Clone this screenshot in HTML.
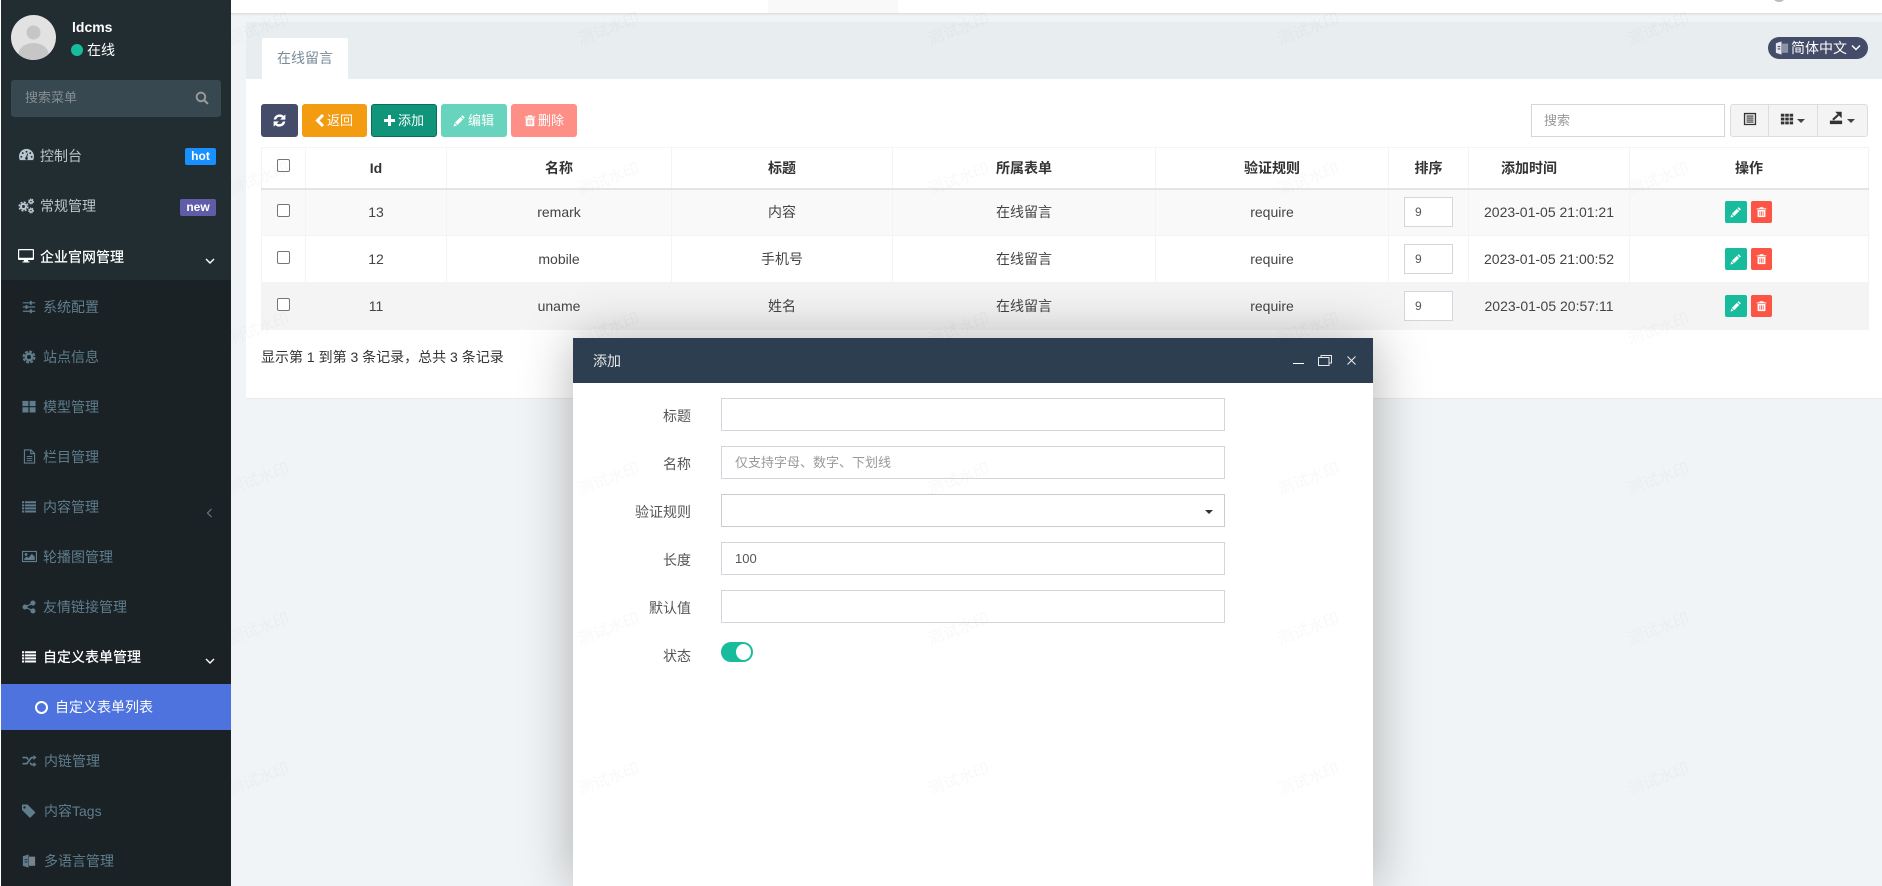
<!DOCTYPE html>
<html lang="zh"><head><meta charset="utf-8"><title>在线留言</title>
<style>
*{box-sizing:border-box}
html,body{margin:0;padding:0;width:1882px;height:886px;overflow:hidden;background:#f1f4f6;font-family:"Liberation Sans","Noto Sans CJK SC",sans-serif;font-size:14px;color:#333}
.a{position:absolute}
.t{position:absolute;height:20px;line-height:20px;white-space:nowrap}
svg.i{position:absolute;fill:currentColor;display:block}
#side{position:absolute;left:0;top:0;width:231px;height:886px;background:#1a2226;border-left:1px solid #fff;z-index:5;overflow:hidden}
#side .top{position:absolute;left:0;top:0;width:230px;height:280px;background:#222d32}
#side .s{color:#b8c7ce}
#side .m{color:#5f7d8c}
#side .w{color:#fff}
.btn{position:absolute;top:104px;height:33px;border-radius:3px;color:#fff;font-size:13px;line-height:31px;border:1px solid transparent}
.btn span{position:absolute;top:0;white-space:nowrap}
#tbl{position:absolute;left:261px;top:147px;width:1607px;border-collapse:collapse;table-layout:fixed;font-size:14px}
#tbl th,#tbl td{border:1px solid #f4f4f4;padding:0;text-align:center;vertical-align:middle;position:relative}
#tbl th{height:41px;border-bottom:2px solid #e4e4e4;font-weight:700;color:#333;line-height:20px;padding-bottom:0}
#tbl td{height:47px;color:#444}
#tbl tr.r1 td{background:#f9f9f9}
#tbl tr.r3 td{background:#f4f4f4;border-color:#f4f4f4}
.cb{display:inline-block;width:13px;height:13px;border:1px solid #767676;border-radius:2px;background:#fff;position:absolute;left:15px;top:50%;margin-top:-9px}
#tbl td .cb{margin-top:-8px}
.ord{position:absolute;left:15px;top:8px;width:49px;height:30px;border:1px solid #d2d6de;background:#fff;font-size:12px;color:#555;line-height:28px;text-align:left;padding-left:10px}
.r1 .ord{top:7px}
.ed,.de{position:absolute;top:12px;height:22px;border-radius:2px;color:#fff}
.r1 .ed,.r1 .de{top:11px}
.ed{left:95px;width:22px;background:#18bc9c}.de{left:121px;width:21px;background:#fc5445}
#wm{position:absolute;left:0;top:0;width:1882px;height:886px;z-index:4;pointer-events:none;overflow:hidden}
#wm span{position:absolute;width:80px;height:20px;line-height:20px;text-align:center;font-size:16px;color:rgba(0,0,0,.028);transform:rotate(-20deg);white-space:nowrap}
#dlg{position:absolute;left:573px;top:338px;width:800px;height:548px;background:#fff;box-shadow:1px 1px 50px rgba(0,0,0,.3);z-index:3}
#dlg .hd{position:absolute;left:0;top:0;width:800px;height:45px;background:#2c3e50}
.inp{position:absolute;left:148px;width:504px;height:33px;border:1px solid #d2d6de;background:#fff;font-size:13px;line-height:31px;padding-left:13px;color:#555}
.lb{position:absolute;left:0;width:118px;text-align:right;height:20px;line-height:20px;color:#555;font-size:14px}
</style></head><body>
<svg width="0" height="0" style="position:absolute"><defs>
<symbol id="dash" viewBox="0 0 16 16"><path fill-rule="evenodd" d="M8 2C3.6 2 0 5.6 0 10c0 1.4.4 2.8 1 4h14c.6-1.2 1-2.6 1-4 0-4.400-3.600-8-8-8zM8 4a1 1 0 1 1 0 2 1 1 0 0 1 0-2zM4 5.500a1 1 0 1 1 0 2 1 1 0 0 1 0-2zM12 5.500a1 1 0 1 1 0 2 1 1 0 0 1 0-2zM2.500 9.500a1 1 0 1 1 0 2 1 1 0 0 1 0-2zM13.500 9.500a1 1 0 1 1 0 2 1 1 0 0 1 0-2zM8.700 7l1-.3-.9 4.200a1.500 1.500 0 1 1-1.400-.1z"/></symbol>
<symbol id="gears" viewBox="0 0 16 16"><g fill="none" stroke="currentColor"><circle cx="5.500" cy="8.500" r="2.500" stroke-width="2"/><circle cx="5.500" cy="8.500" r="4.300" stroke-width="1.600" stroke-dasharray="2 1.400"/><circle cx="13" cy="3.500" r="1.500" stroke-width="1.400"/><circle cx="13" cy="3.500" r="2.500" stroke-width="1" stroke-dasharray="1.200 .9"/><circle cx="13" cy="12.500" r="1.500" stroke-width="1.400"/><circle cx="13" cy="12.500" r="2.500" stroke-width="1" stroke-dasharray="1.200 .9"/></g></symbol>
<symbol id="desk" viewBox="0 0 16 16"><path fill-rule="evenodd" d="M1 1h14a1 1 0 0 1 1 1v9a1 1 0 0 1-1 1H10l.3 1.500h1.200v1h-7v-1h1.200L6 12H1a1 1 0 0 1-1-1V2a1 1 0 0 1 1-1zM1.200 2.200V9.800h13.600V2.200z"/></symbol>
<symbol id="slid" viewBox="0 0 16 16"><path d="M1 2.500h14v1.400H1zM1 7.300h14v1.400H1zM1 12.100h14v1.400H1z"/><path d="M9 1h2.200v4.400H9zM4 5.800h2.200v4.400H4zM9 10.600h2.200V15H9z"/></symbol>
<symbol id="cog" viewBox="0 0 16 16"><circle cx="8" cy="8" r="3.700" fill="none" stroke="currentColor" stroke-width="2.800"/><circle cx="8" cy="8" r="6.300" fill="none" stroke="currentColor" stroke-width="2.200" stroke-dasharray="3.300 1.650"/></symbol>
<symbol id="th" viewBox="0 0 16 16"><path d="M.5 1.500h6.800v6H.5zM8.700 1.500h6.800v6H8.700zM.5 8.900h6.800v6H.5zM8.700 8.900h6.800v6H8.700z"/></symbol>
<symbol id="file" viewBox="0 0 16 16"><path fill="none" stroke="currentColor" stroke-width="1.200" d="M2.600 1h7l3.800 3.800V15H2.600zM9.300 1v4h4.100"/><path d="M5 7.500h6v1H5zM5 9.700h6v1H5zM5 11.900h6v1H5z"/></symbol>
<symbol id="list" viewBox="0 0 16 16"><path d="M0 2h2.500v2.300H0zM3.500 2H16v2.300H3.500zM0 5.500h2.500v2.300H0zM3.500 5.500H16v2.300H3.500zM0 9h2.500v2.300H0zM3.500 9H16v2.300H3.500zM0 12.500h2.500v2.300H0zM3.500 12.500H16v2.300H3.500z"/></symbol>
<symbol id="pic" viewBox="0 0 16 16"><path fill-rule="evenodd" d="M0 2h16v12H0zM1.200 3.200v9.600h13.600V3.200z"/><circle cx="4.300" cy="5.800" r="1.500"/><path d="M2.500 11.800V10l2.500-2 1.800 1.400L10.500 5l3.100 3.300v3.500z"/></symbol>
<symbol id="share" viewBox="0 0 16 16"><circle cx="3.500" cy="8" r="2.900"/><circle cx="12.500" cy="3.500" r="2.900"/><circle cx="12.500" cy="12.500" r="2.900"/><path fill="none" stroke="currentColor" stroke-width="1.300" d="M3.500 8l9-4.500M3.500 8l9 4.500"/></symbol>
<symbol id="rand" viewBox="0 0 16 16"><path d="M12.500 1.200L16 4l-3.500 2.800V5h-1.700L5.300 12H0v-1.800h4.300L9.800 3.200h2.700zM12.500 9.200L16 12l-3.500 2.800V13H9.800L8 10.800 9.200 9.300l1.500 1.900h1.800zM0 3.200h5.300l1.900 2.300L6 7 4.300 5H0z"/></symbol>
<symbol id="tags" viewBox="0 0 16 16"><path fill-rule="evenodd" d="M1 1.500h5.500l8 8-5.500 5.500-8-8zM3.500 3.200a1.200 1.200 0 1 0 0 2.400 1.200 1.200 0 0 0 0-2.400z"/></symbol>
<symbol id="lang" viewBox="0 0 16 16"><path d="M1 2.500l6.500-2v15L1 13.500z"/><path fill="#b8c7ce" opacity=".6" d="M8 3h7v10.500H8z"/><path fill="#1a2226" d="M3 6h3v1H3zM3 8.500h3v1H3z"/></symbol>
<symbol id="refresh" viewBox="0 0 16 16"><path stroke="currentColor" stroke-width=".9" d="M14.800 1.500v5H9.800l2-2A5 5 0 0 0 3.600 6.300H1.400A7 7 0 0 1 13.200 3zM1.200 14.500v-5h5l-2 2a5 5 0 0 0 8.200-1.800h2.200A7 7 0 0 1 2.800 13z"/></symbol>
<symbol id="pencil" viewBox="0 0 16 16"><path d="M11.500 1.500l3 3-1.500 1.500-3-3zM9.200 3.800l3 3L5.500 13.500l-3-3zM1.800 11.300l3 3-4.100 1.100z"/></symbol>
<symbol id="trash" viewBox="0 0 16 16"><path fill-rule="evenodd" d="M5.500 1h5l.8 1.700H15v1.500H1V2.700h3.700zM2.300 5h11.400v9.500a1 1 0 0 1-1 1H3.300a1 1 0 0 1-1-1zM5 7v6.500h1.200V7zM7.400 7v6.500h1.200V7zM9.800 7v6.500H11V7z"/></symbol>
<symbol id="tbl2" viewBox="0 0 16 16"><path fill-rule="evenodd" d="M1 1h14v14H1zM2.500 2.500v11h11v-11z"/><path d="M4 4h8v1.300H4zM4 6.300h8v1.300H4zM4 8.600h8v1.300H4zM4 10.900h8v1.300H4z"/></symbol>
<symbol id="grid" viewBox="0 0 16 16"><path d="M1 2h4v3.300H1zM6 2h4v3.300H6zM11 2h4v3.300h-4zM1 6.400h4v3.300H1zM6 6.400h4v3.300H6zM11 6.400h4v3.300h-4zM1 10.800h4v3.300H1zM6 10.800h4v3.300H6zM11 10.800h4v3.300h-4z"/></symbol>
<symbol id="exp" viewBox="0 0 16 16"><path d="M1 11h14v4H1z"/><path d="M7 .8h7.500v7.500z"/><path fill="none" stroke="currentColor" stroke-width="2.400" d="M4.500 10L10.500 4.500"/></symbol>
</defs></svg>

<!-- top bar -->
<div class="a" style="left:231px;top:0;width:1651px;height:14px;background:#fff;border-bottom:1px solid #dde1e4;box-shadow:0 1px 2px rgba(0,0,0,.06)"></div>
<div class="a" style="left:768px;top:0;width:130px;height:13px;background:#f9f9f9"></div>
<div class="a" style="left:1772px;top:-12px;width:14px;height:14px;border-radius:50%;background:#bbb"></div>

<!-- panel -->
<div class="a" style="left:246px;top:22px;width:1636px;height:57px;background:#e8edf0"></div>
<div class="a" style="left:246px;top:79px;width:1636px;height:320px;background:#fff;border-bottom:1px solid #e8eaec"></div>
<div class="a" style="left:262px;top:38px;width:86px;height:41px;background:#fff;border-radius:2px 2px 0 0"></div>
<div class="t" style="left:277px;top:48px;color:#7b8b98">在线留言</div>

<div class="a" style="left:1768px;top:37px;width:100px;height:22px;border-radius:11px;background:#444c69"></div>
<svg class="i" style="left:1775px;top:40px;color:#e6e6ef" width="14" height="16"><use href="#lang"/></svg>
<div class="t" style="left:1791px;top:38px;color:#fff">简体中文</div>
<svg class="i" style="left:1851px;top:44px" width="10" height="8" viewBox="0 0 10 8"><path d="M1 1.500l4 4 4-4" fill="none" stroke="#fff" stroke-width="1.500"/></svg>

<!-- toolbar -->
<div class="btn" style="left:261px;width:37px;background:#444c69"><svg class="i" style="left:11px;top:9px;color:#fff" width="13" height="13"><use href="#refresh"/></svg></div>
<div class="btn" style="left:302px;width:65px;background:#f39c12"><svg class="i" style="left:12px;top:9px" width="10" height="13" viewBox="0 0 10 13"><path d="M8 1L2.500 6.500 8 12" fill="none" stroke="#fff" stroke-width="3"/></svg><span style="left:24px">返回</span></div>
<div class="btn" style="left:371px;width:66px;background:#11957a;border-color:#0c6d59"><svg class="i" style="left:12px;top:10px" width="11" height="11" viewBox="0 0 11 11"><path fill="#fff" d="M4 0h3v4h4v3H7v4H4V7H0V4h4z"/></svg><span style="left:26px">添加</span></div>
<div class="btn" style="left:441px;width:66px;background:#69d4bd"><svg class="i" style="left:11px;top:9px;color:#fff" width="13" height="13"><use href="#pencil"/></svg><span style="left:26px">编辑</span></div>
<div class="btn" style="left:511px;width:66px;background:#fd8f86"><svg class="i" style="left:12px;top:9px;color:#fff" width="12" height="13"><use href="#trash"/></svg><span style="left:26px">删除</span></div>

<div class="a" style="left:1531px;top:104px;width:194px;height:33px;background:#fff;border:1px solid #d2d6de;font-size:13px;line-height:31px;padding-left:12px;color:#999">搜索</div>
<div class="a" style="left:1730px;top:104px;width:138px;height:33px;background:#f4f4f4;border:1px solid #ddd;border-radius:3px"></div>
<div class="a" style="left:1768px;top:105px;width:1px;height:31px;background:#ddd"></div>
<div class="a" style="left:1817px;top:105px;width:1px;height:31px;background:#ddd"></div>
<svg class="i" style="left:1743px;top:112px;color:#333" width="14" height="14"><use href="#tbl2"/></svg>
<svg class="i" style="left:1780px;top:112px;color:#333" width="14" height="14"><use href="#grid"/></svg>
<svg class="i" style="left:1797px;top:119px" width="8" height="4" viewBox="0 0 8 4"><path d="M0 0h8L4 4z" fill="#444"/></svg>
<svg class="i" style="left:1829px;top:110px;color:#333" width="14" height="16"><use href="#exp"/></svg>
<svg class="i" style="left:1847px;top:119px" width="8" height="4" viewBox="0 0 8 4"><path d="M0 0h8L4 4z" fill="#444"/></svg>

<!-- table -->
<table id="tbl">
<colgroup><col style="width:44px"><col style="width:141px"><col style="width:225px"><col style="width:221px"><col style="width:263px"><col style="width:233px"><col style="width:80px"><col style="width:161px"><col style="width:239px"></colgroup>
<tr><th><i class="cb"></i></th><th>Id</th><th>名称</th><th>标题</th><th>所属表单</th><th>验证规则</th><th>排序</th><th style="padding-right:40px">添加时间</th><th>操作</th></tr>
<tr class="r1"><td><i class="cb"></i></td><td>13</td><td>remark</td><td>内容</td><td>在线留言</td><td>require</td><td><div class="ord">9</div></td><td>2023-01-05 21:01:21</td><td><div class="ed"><svg class="i" style="left:5px;top:5px;color:#fff" width="12" height="12"><use href="#pencil"/></svg></div><div class="de"><svg class="i" style="left:5px;top:5px;color:#fff" width="11" height="12"><use href="#trash"/></svg></div></td></tr>
<tr class="r2"><td><i class="cb"></i></td><td>12</td><td>mobile</td><td>手机号</td><td>在线留言</td><td>require</td><td><div class="ord">9</div></td><td>2023-01-05 21:00:52</td><td><div class="ed"><svg class="i" style="left:5px;top:5px;color:#fff" width="12" height="12"><use href="#pencil"/></svg></div><div class="de"><svg class="i" style="left:5px;top:5px;color:#fff" width="11" height="12"><use href="#trash"/></svg></div></td></tr>
<tr class="r3"><td><i class="cb"></i></td><td>11</td><td>uname</td><td>姓名</td><td>在线留言</td><td>require</td><td><div class="ord">9</div></td><td>2023-01-05 20:57:11</td><td><div class="ed"><svg class="i" style="left:5px;top:5px;color:#fff" width="12" height="12"><use href="#pencil"/></svg></div><div class="de"><svg class="i" style="left:5px;top:5px;color:#fff" width="11" height="12"><use href="#trash"/></svg></div></td></tr>
</table>
<div class="t" style="left:261px;top:347px;color:#333">显示第 1 到第 3 条记录，总共 3 条记录</div>

<!-- dialog -->
<div id="dlg">
<div class="hd"></div>
<div class="t" style="left:20px;top:13px;color:#e8e8e8;font-size:14px">添加</div>
<div class="a" style="left:720px;top:25px;width:11px;height:1px;background:#fff"></div>
<svg class="i" style="left:745px;top:17px" width="14" height="11" viewBox="0 0 14 11"><path fill="none" stroke="#e8e8e8" d="M.5 2.500h10.500v8H.5zM3 2.500V.5h10.500v7.500H11"/></svg>
<svg class="i" style="left:774px;top:18px" width="9" height="9" viewBox="0 0 9 9"><path stroke="#e8e8e8" stroke-width="1.100" d="M.5.500l8 8M8.500.500l-8 8"/></svg>
<div class="lb" style="top:68px">标题</div><div class="inp" style="top:60px"></div>
<div class="lb" style="top:116px">名称</div><div class="inp" style="top:108px;color:#999">仅支持字母、数字、下划线</div>
<div class="lb" style="top:164px">验证规则</div><div class="inp" style="top:156px;border-color:#ccc"></div>
<svg class="i" style="left:632px;top:172px" width="8" height="4" viewBox="0 0 8 4"><path d="M0 0h8L4 4z" fill="#333"/></svg>
<div class="lb" style="top:212px">长度</div><div class="inp" style="top:204px">100</div>
<div class="lb" style="top:260px">默认值</div><div class="inp" style="top:252px"></div>
<div class="lb" style="top:308px">状态</div>
<div class="a" style="left:148px;top:304px;width:32px;height:20px;border-radius:10px;background:#18bc9c"></div>
<div class="a" style="left:163px;top:306px;width:15px;height:16px;border-radius:50%;background:#fff"></div>
</div>

<!-- watermark -->
<div id="wm">
<span style="left:219px;top:20px">测试水印</span><span style="left:569px;top:20px">测试水印</span><span style="left:919px;top:20px">测试水印</span><span style="left:1269px;top:20px">测试水印</span><span style="left:1619px;top:20px">测试水印</span>
<span style="left:219px;top:170px">测试水印</span><span style="left:569px;top:170px">测试水印</span><span style="left:919px;top:170px">测试水印</span><span style="left:1269px;top:170px">测试水印</span><span style="left:1619px;top:170px">测试水印</span>
<span style="left:219px;top:320px">测试水印</span><span style="left:569px;top:320px">测试水印</span><span style="left:919px;top:320px">测试水印</span><span style="left:1269px;top:320px">测试水印</span><span style="left:1619px;top:320px">测试水印</span>
<span style="left:219px;top:470px">测试水印</span><span style="left:569px;top:470px">测试水印</span><span style="left:919px;top:470px">测试水印</span><span style="left:1269px;top:470px">测试水印</span><span style="left:1619px;top:470px">测试水印</span>
<span style="left:219px;top:620px">测试水印</span><span style="left:569px;top:620px">测试水印</span><span style="left:919px;top:620px">测试水印</span><span style="left:1269px;top:620px">测试水印</span><span style="left:1619px;top:620px">测试水印</span>
<span style="left:219px;top:770px">测试水印</span><span style="left:569px;top:770px">测试水印</span><span style="left:919px;top:770px">测试水印</span><span style="left:1269px;top:770px">测试水印</span><span style="left:1619px;top:770px">测试水印</span>
</div>

<!-- sidebar -->
<div id="side">
<div class="top"></div>
<svg class="i" style="left:10px;top:15px" width="45" height="45" viewBox="0 0 45 45"><defs><clipPath id="cp"><circle cx="22.500" cy="22.500" r="22.500"/></clipPath></defs><circle cx="22.500" cy="22.500" r="22.500" fill="#e2e2e2"/><g clip-path="url(#cp)" fill="#c6c6c6"><circle cx="22.500" cy="17.500" r="7"/><ellipse cx="22.500" cy="39" rx="15" ry="11"/></g></svg>
<div class="t w" style="left:71px;top:17px;font-weight:700;font-size:14px">ldcms</div>
<div class="a" style="left:70px;top:44px;width:12px;height:12px;border-radius:50%;background:#18bc9c"></div>
<div class="t w" style="left:86px;top:40px">在线</div>
<div class="a" style="left:10px;top:80px;width:210px;height:37px;border-radius:3px;background:#374850"></div>
<div class="t" style="left:24px;top:88px;font-size:13px;color:#858e93">搜索菜单</div>
<svg class="i" style="left:194px;top:91px" width="14" height="14" viewBox="0 0 13 13"><circle cx="5.500" cy="5.500" r="4" fill="none" stroke="#999" stroke-width="1.800"/><path d="M8.500 8.500l3.500 3.500" stroke="#999" stroke-width="2"/></svg>

<svg class="i s" style="left:18px;top:147px" width="15" height="15"><use href="#dash"/></svg>
<div class="t s" style="left:39px;top:146px">控制台</div>
<div class="a" style="left:184px;top:148px;width:31px;height:17px;border-radius:2px;background:#1890ff;color:#fff;font-weight:700;font-size:12px;line-height:16px;text-align:center">hot</div>
<svg class="i s" style="left:17px;top:198px" width="16" height="16"><use href="#gears"/></svg>
<div class="t s" style="left:39px;top:196px">常规管理</div>
<div class="a" style="left:179px;top:199px;width:36px;height:17px;border-radius:2px;background:#605ca8;color:#fff;font-weight:700;font-size:12px;line-height:16px;text-align:center">new</div>
<svg class="i w" style="left:17px;top:248px" width="16" height="16"><use href="#desk"/></svg>
<div class="t w" style="left:39px;top:247px;font-weight:500">企业官网管理</div>
<svg class="i" style="left:204px;top:257px" width="10" height="8" viewBox="0 0 10 8"><path d="M1 2l4 4 4-4" fill="none" stroke="#fff" stroke-width="1.400"/></svg>

<svg class="i m" style="left:21px;top:300px" width="14" height="14"><use href="#slid"/></svg>
<div class="t m" style="left:42px;top:297px">系统配置</div>
<svg class="i m" style="left:21px;top:350px" width="14" height="14"><use href="#cog"/></svg>
<div class="t m" style="left:42px;top:347px">站点信息</div>
<svg class="i m" style="left:21px;top:399px" width="14" height="15"><use href="#th"/></svg>
<div class="t m" style="left:42px;top:397px">模型管理</div>
<svg class="i m" style="left:21px;top:449px" width="15" height="15"><use href="#file"/></svg>
<div class="t m" style="left:42px;top:447px">栏目管理</div>
<svg class="i m" style="left:21px;top:499px" width="14" height="15"><use href="#list"/></svg>
<div class="t m" style="left:42px;top:497px">内容管理</div>
<svg class="i" style="left:205px;top:508px" width="7" height="10" viewBox="0 0 7 10"><path d="M5.500 1L1.500 5l4 4" fill="none" stroke="#5f7d8c" stroke-width="1.200"/></svg>
<svg class="i m" style="left:21px;top:549px" width="15" height="15"><use href="#pic"/></svg>
<div class="t m" style="left:42px;top:547px">轮播图管理</div>
<svg class="i m" style="left:21px;top:600px" width="14" height="14"><use href="#share"/></svg>
<div class="t m" style="left:42px;top:597px">友情链接管理</div>
<svg class="i w" style="left:21px;top:649px" width="14" height="15"><use href="#list"/></svg>
<div class="t w" style="left:42px;top:647px;font-weight:500">自定义表单管理</div>
<svg class="i" style="left:204px;top:657px" width="10" height="8" viewBox="0 0 10 8"><path d="M1 2l4 4 4-4" fill="none" stroke="#fff" stroke-width="1.400"/></svg>
<div class="a" style="left:0;top:684px;width:230px;height:46px;background:#4e73df"></div>
<div class="a" style="left:34px;top:701px;width:13px;height:13px;border-radius:50%;border:2.500px solid #fff"></div>
<div class="t w" style="left:54px;top:697px">自定义表单列表</div>
<svg class="i m" style="left:21px;top:754px" width="15" height="14"><use href="#rand"/></svg>
<div class="t m" style="left:43px;top:751px">内链管理</div>
<svg class="i m" style="left:20px;top:803px" width="16" height="16"><use href="#tags"/></svg>
<div class="t m" style="left:43px;top:801px">内容Tags</div>
<svg class="i m" style="left:21px;top:853px" width="14" height="16"><use href="#lang"/></svg>
<div class="t m" style="left:43px;top:851px">多语言管理</div>
</div>
</body></html>
